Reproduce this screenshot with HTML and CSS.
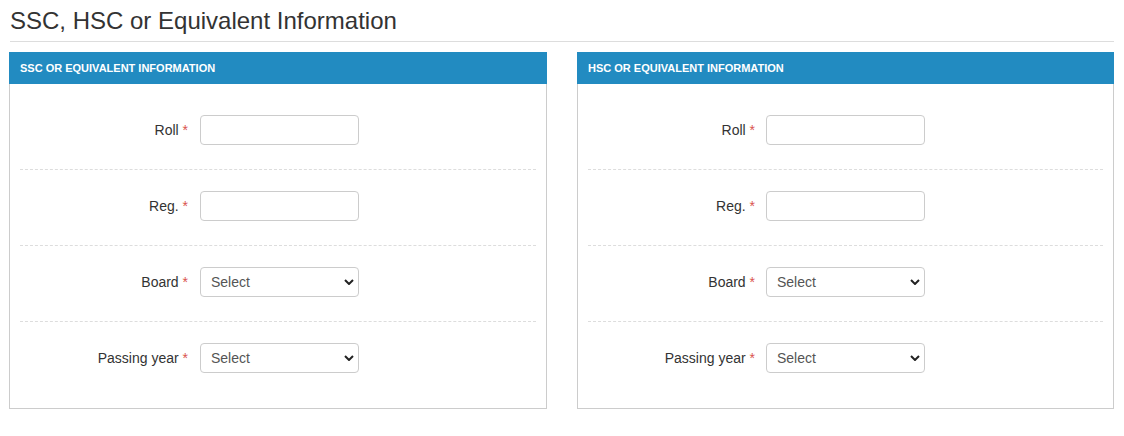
FILE: index.html
```html
<!DOCTYPE html>
<html>
<head>
<meta charset="utf-8">
<link rel="stylesheet" href="styles.css">
</head>
<body>
<div class="page">
  <h3 class="title">SSC, HSC or Equivalent Information</h3>
  <div class="panels">
    <div class="panel">
      <div class="panel-head">SSC OR EQUIVALENT INFORMATION</div>
      <div class="panel-body">
        <div class="row"><label class="lbl">Roll <span class="req">*</span></label><input class="ctl" type="text"></div>
        <div class="row"><label class="lbl">Reg. <span class="req">*</span></label><input class="ctl" type="text"></div>
        <div class="row"><label class="lbl">Board <span class="req">*</span></label><div class="sel"><select class="ctl"><option>Select</option></select><svg class="chev" width="10" height="6" viewBox="0 0 10 6"><path d="M1 1 L5 5 L9 1" fill="none" stroke="#222" stroke-width="2"/></svg></div></div>
        <div class="row last"><label class="lbl">Passing year <span class="req">*</span></label><div class="sel"><select class="ctl"><option>Select</option></select><svg class="chev" width="10" height="6" viewBox="0 0 10 6"><path d="M1 1 L5 5 L9 1" fill="none" stroke="#222" stroke-width="2"/></svg></div></div>
      </div>
    </div>
    <div class="panel panel-right">
      <div class="panel-head">HSC OR EQUIVALENT INFORMATION</div>
      <div class="panel-body">
        <div class="row"><label class="lbl">Roll <span class="req">*</span></label><input class="ctl" type="text"></div>
        <div class="row"><label class="lbl">Reg. <span class="req">*</span></label><input class="ctl" type="text"></div>
        <div class="row"><label class="lbl">Board <span class="req">*</span></label><div class="sel"><select class="ctl"><option>Select</option></select><svg class="chev" width="10" height="6" viewBox="0 0 10 6"><path d="M1 1 L5 5 L9 1" fill="none" stroke="#222" stroke-width="2"/></svg></div></div>
        <div class="row last"><label class="lbl">Passing year <span class="req">*</span></label><div class="sel"><select class="ctl"><option>Select</option></select><svg class="chev" width="10" height="6" viewBox="0 0 10 6"><path d="M1 1 L5 5 L9 1" fill="none" stroke="#222" stroke-width="2"/></svg></div></div>
      </div>
    </div>
  </div>
</div>
</body>
</html>
```

FILE: styles.css
```css
* { box-sizing: border-box; }
html, body { margin: 0; padding: 0; background: #fff; }
body { font-family: "Liberation Sans", Arial, sans-serif; color: #333; font-size: 14px; }
.page { width: 1124px; padding: 0 10px 0 9px; }
.title {
  margin: 0 0 0 1px;
  padding: 7px 0 7px;
  font-size: 24px;
  font-weight: normal;
  line-height: 27px;
  color: #333;
  border-bottom: 1px solid #ddd;
}
.panels {
  display: grid;
  grid-template-columns: 538px 537px;
  column-gap: 30px;
  margin-top: 10px;
}
.panel { border: 1px solid #ccc; border-top: none; }
.panel-head {
  margin: 0 -1px;
  height: 32px;
  background: #228bc1;
  color: #fff;
  font-weight: bold;
  font-size: 11px;
  line-height: 32px;
  padding-left: 11px;
}
.panel-body { padding: 10px; }
.row {
  display: flex;
  align-items: center;
  padding: 21px 0 24px;
  border-bottom: 1px dashed #ddd;
}
.row.last { border-bottom: none; padding-bottom: 25px; }
.lbl {
  width: 180px;
  text-align: right;
  padding-right: 12px;
  color: #333;
  font-size: 14px;
}
.panel-right .lbl { width: 178px; padding-right: 11px; }
.req { color: #d9534f; }
.ctl {
  width: 159px;
  height: 30px;
  border: 1px solid #ccc;
  border-radius: 4px;
  background: #fff;
  font-family: "Liberation Sans", Arial, sans-serif;
  font-size: 14px;
  color: #555;
  padding: 0 10px;
  margin: 0;
  outline: none;
}
select.ctl { -webkit-appearance: none; appearance: none; }
.sel { position: relative; width: 159px; height: 30px; }
.chev { position: absolute; right: 5px; top: 12px; pointer-events: none; }
```
